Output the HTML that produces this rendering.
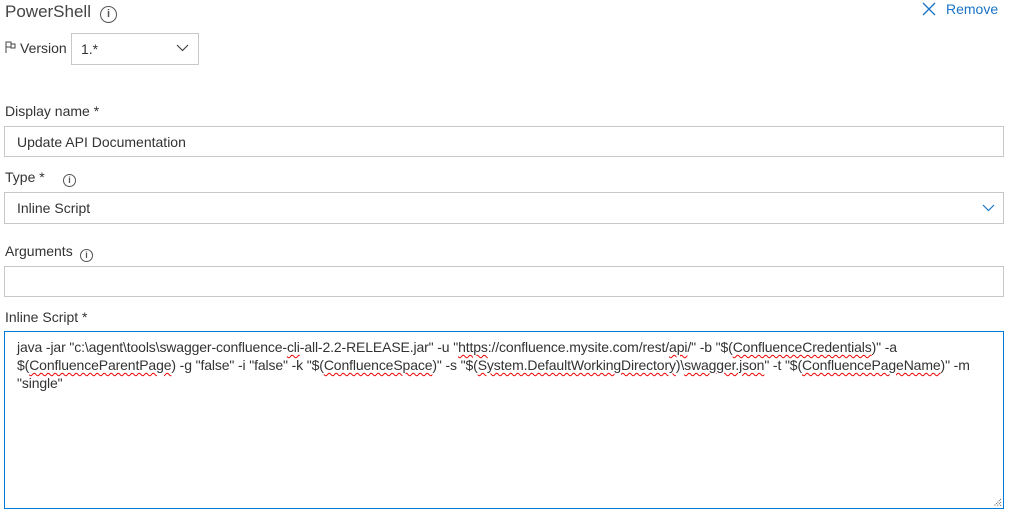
<!DOCTYPE html>
<html><head><meta charset="utf-8"><style>
*{box-sizing:border-box;margin:0;padding:0}
body{width:1009px;height:517px;background:#fff;font-family:"Liberation Sans",sans-serif;color:#333;position:relative;overflow:hidden;font-size:14px}
.a{position:absolute;white-space:nowrap}
.box{position:absolute;left:4px;width:1000px;border:1px solid #c8c8c8;background:#fff}
.lbl{font-size:14px;color:#333}
.info{display:inline-block;width:13px;height:13px;border:1px solid #555;border-radius:50%;font-size:9px;line-height:11px;text-align:center;color:#555;font-weight:bold}
.sq{text-decoration:underline wavy #e00;text-decoration-thickness:1px;text-underline-offset:2px}
</style></head><body>
<div class="a" style="left:5px;top:2px;font-size:17px;color:#444">PowerShell</div>
<div class="a" style="left:100px;top:4px"><span class="info" style="width:17px;height:17px;line-height:15px;font-size:11px">i</span></div>
<svg class="a" style="left:922px;top:2px" width="14" height="14" viewBox="0 0 14 14"><path d="M1 1L13 13M13 1L1 13" stroke="#1a73c6" stroke-width="1.3"/></svg>
<div class="a" style="left:946px;top:1px;font-size:14px;color:#1a73c6">Remove</div>
<svg class="a" style="left:5px;top:41px" width="11" height="12" viewBox="0 0 11 12"><path d="M1 0.5V12M1 1H6V6H1M6 3H10V7H6V6" fill="none" stroke="#444" stroke-width="1"/></svg>
<div class="a lbl" style="left:20px;top:40px">Version</div>
<div class="a" style="left:71px;top:33px;width:128px;height:32px;border:1px solid #c8c8c8"></div>
<div class="a" style="left:81px;top:41px;font-size:14px">1.*</div>
<svg class="a" style="left:176px;top:44px" width="13" height="8" viewBox="0 0 13 8"><path d="M1 1L6.5 6.5L12 1" fill="none" stroke="#444" stroke-width="1.2"/></svg>

<div class="a lbl" style="left:5px;top:103px">Display name *</div>
<div class="box" style="top:126px;height:31px"></div>
<div class="a lbl" style="left:17px;top:134px">Update API Documentation</div>

<div class="a lbl" style="left:5px;top:169px">Type *</div>
<div class="a" style="left:63px;top:170px"><span class="info">i</span></div>
<div class="box" style="top:192px;height:32px"></div>
<div class="a lbl" style="left:17px;top:200px">Inline Script</div>
<svg class="a" style="left:982px;top:204px" width="13" height="8" viewBox="0 0 13 8"><path d="M1 1L6.5 6.5L12 1" fill="none" stroke="#1a73c6" stroke-width="1.2"/></svg>

<div class="a lbl" style="left:5px;top:243px">Arguments</div>
<div class="a" style="left:80px;top:245px"><span class="info">i</span></div>
<div class="box" style="top:266px;height:31px"></div>

<div class="a lbl" style="left:5px;top:309px">Inline Script *</div>
<div class="box" style="top:331px;height:178px;border-color:#0078d4"></div>
<svg class="a" style="left:992px;top:497px" width="10" height="10" viewBox="0 0 10 10"><path d="M9 2L2 9M9 5L5 9M9 8L8 9" stroke="#555" stroke-dasharray="1 1"/></svg>
<div class="a" style="left:17px;top:338px;line-height:18px;font-size:14px;letter-spacing:-0.13px;color:#333">java -jar "c:\agent\tools\swagger-confluence-<span class="sq">cli</span>-all-2.2-RELEASE.jar" -u "<span class="sq">https</span>://confluence.mysite.com/rest/<span class="sq">api</span>/" -b "$(<span class="sq">ConfluenceCredentials</span>)" -a<br>$(<span class="sq">ConfluenceParentPage</span>) -g "false" -i "false" -k "$(<span class="sq">ConfluenceSpace</span>)" -s "$(<span class="sq">System.DefaultWorkingDirectory</span>)\<span class="sq">swagger.json</span>" -t "$(<span class="sq">ConfluencePageName</span>)" -m<br>"single"</div>
</body></html>
